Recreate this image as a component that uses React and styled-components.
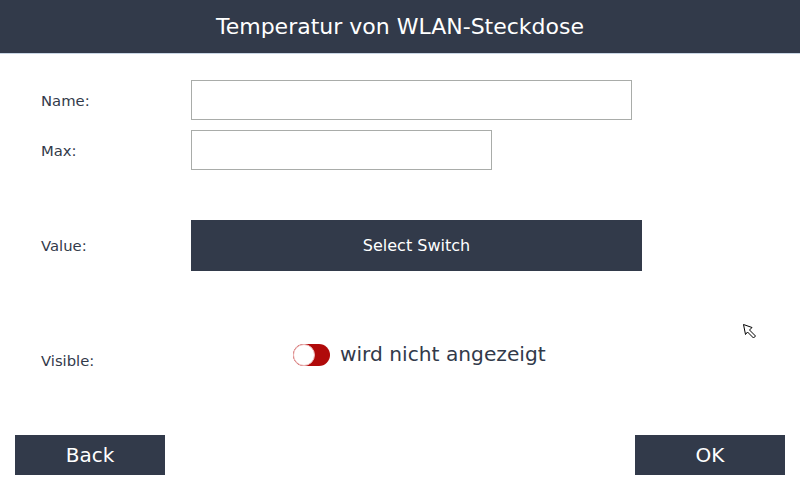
import styled, { createGlobalStyle } from "styled-components";

const GlobalStyle = createGlobalStyle`
	body {
		margin: 0;
		background: #ffffff;
		font-family: "DejaVu Sans", "Liberation Sans", sans-serif;
	}
`;

export default function App() {
	return (
		<Page>
			<GlobalStyle />
			<Header>
				<h1>Temperatur von WLAN-Steckdose</h1>
			</Header>
			<Form>
				<Row $top={26}>
					<Label>Name:</Label>
					<Input $width={441} />
				</Row>
				<Row $top={10}>
					<Label>Max:</Label>
					<Input $width={301} />
				</Row>
				<Row $top={50}>
					<Label>Value:</Label>
					<SelectButton>Select Switch</SelectButton>
				</Row>
				<Row $top={72}>
					<Label $shift={5}>Visible:</Label>
					<Toggle>
						<Track>
							<Knob />
						</Track>
						<ToggleText>wird nicht angezeigt</ToggleText>
					</Toggle>
				</Row>
			</Form>
			<Footer>
				<FooterButton>Back</FooterButton>
				<FooterButton>OK</FooterButton>
			</Footer>
			<Cursor width="16" height="17" viewBox="0 0 16 17">
				<path
					d="M0.5 0.5 L9 3.5 L6.5 6 L12.5 12 L10.5 14 L4.5 8 L2.5 10.5 Z"
					fill="#ffffff"
					stroke="#000000"
					strokeWidth="1"
					strokeLinejoin="miter"
				/>
			</Cursor>
		</Page>
	);
}

const Page = styled.div`
	position: relative;
	width: 800px;
	height: 480px;
	display: flex;
	flex-direction: column;
	overflow: hidden;
`;

const Header = styled.header`
	height: 53px;
	background-color: #323a4a;
	border-bottom: 1px solid #c8d5e4;
	display: flex;
	align-items: center;
	justify-content: center;

	h1 {
		margin: 0;
		font-weight: 400;
		font-size: 22px;
		color: #ffffff;
	}
`;

const Form = styled.main`
	display: flex;
	flex-direction: column;
	padding-left: 41px;
`;

const Row = styled.div`
	display: flex;
	align-items: center;
	margin-top: ${(p) => p.$top}px;
`;

const Label = styled.span`
	width: 150px;
	font-size: 14.8px;
	color: #323a4a;
	position: relative;
	top: ${(p) => p.$shift || 0}px;
`;

const Input = styled.input`
	box-sizing: border-box;
	width: ${(p) => p.$width}px;
	height: 40px;
	margin: 0;
	border: 1px solid #a9aca9;
	background: #ffffff;
	outline: none;
`;

const SelectButton = styled.div`
	width: 451px;
	height: 51px;
	background-color: #323a4a;
	color: #ffffff;
	font-size: 16px;
	display: flex;
	align-items: center;
	justify-content: center;
`;

const Toggle = styled.div`
	display: flex;
	align-items: center;
	gap: 10px;
	margin-left: 102px;
`;

const Track = styled.div`
	position: relative;
	width: 37px;
	height: 22px;
	border-radius: 11px;
	background-color: #b00a0a;
`;

const Knob = styled.div`
	position: absolute;
	left: 0;
	top: 0;
	box-sizing: border-box;
	width: 22px;
	height: 22px;
	border-radius: 50%;
	background: #ffffff;
	border: 1px solid #eeb8b8;
`;

const ToggleText = styled.span`
	font-size: 20.2px;
	color: #323a4a;
	position: relative;
	top: -1px;
`;

const Footer = styled.footer`
	margin-top: auto;
	display: flex;
	justify-content: space-between;
	padding: 0 15px 5px;
`;

const FooterButton = styled.div`
	width: 150px;
	height: 40px;
	background-color: #323a4a;
	color: #ffffff;
	font-size: 20px;
	display: flex;
	align-items: center;
	justify-content: center;
`;

const Cursor = styled.svg`
	position: absolute;
	left: 743px;
	top: 324px;
`;
